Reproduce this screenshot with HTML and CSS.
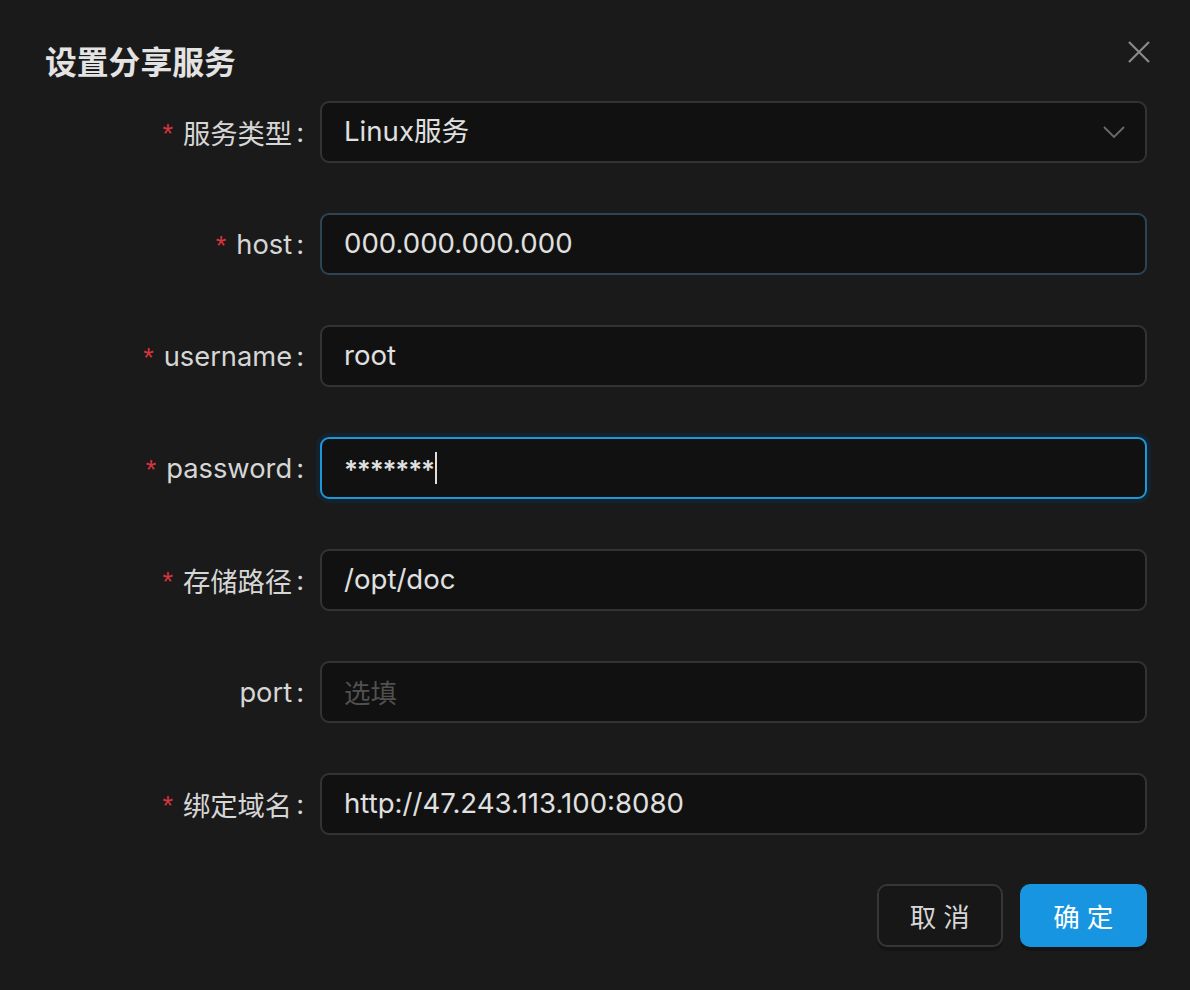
FILE: index.html
```html
<!DOCTYPE html>
<html lang="zh">
<head>
<meta charset="utf-8">
<title>设置分享服务</title>
<link rel="stylesheet" href="styles.css">
</head>
<body>
<div class="modal">
  <div class="modal-header">
    <h1 class="modal-title">设置分享服务</h1>
    <button class="close" aria-label="close">
      <svg width="24" height="24" viewBox="0 0 24 24"><path d="M2 2 L22 22 M22 2 L2 22" stroke="#8a8a8a" stroke-width="2.2" fill="none"/></svg>
    </button>
  </div>
  <form class="form">
    <div class="row">
      <label class="label"><span class="req">*</span>服务类型<span class="colon">:</span></label>
      <div class="control select">
        <span class="value">Linux服务</span>
        <svg class="arrow" width="22" height="12" viewBox="0 0 22 12"><path d="M1 1 L11 11 L21 1" stroke="#6a6a6a" stroke-width="1.8" fill="none"/></svg>
      </div>
    </div>
    <div class="row">
      <label class="label"><span class="req">*</span>host<span class="colon">:</span></label>
      <div class="control hover"><span class="value">000.000.000.000</span></div>
    </div>
    <div class="row">
      <label class="label"><span class="req">*</span>username<span class="colon">:</span></label>
      <div class="control"><span class="value">root</span></div>
    </div>
    <div class="row">
      <label class="label"><span class="req">*</span>password<span class="colon">:</span></label>
      <div class="control focus"><span class="value pw">*******</span><span class="caret"></span></div>
    </div>
    <div class="row">
      <label class="label"><span class="req">*</span>存储路径<span class="colon">:</span></label>
      <div class="control"><span class="value">/opt/doc</span></div>
    </div>
    <div class="row">
      <label class="label">port<span class="colon">:</span></label>
      <div class="control"><span class="value placeholder">选填</span></div>
    </div>
    <div class="row">
      <label class="label"><span class="req">*</span>绑定域名<span class="colon">:</span></label>
      <div class="control"><span class="value">http://47.243.113.100:8080</span></div>
    </div>
  </form>
  <div class="footer">
    <button class="btn">取 消</button>
    <button class="btn primary">确 定</button>
  </div>
</div>
</body>
</html>
```
FILE: styles.css
```css
html, body {
  margin: 0;
  padding: 0;
  background: #1a1a1a;
}
body {
  width: 1190px;
  height: 990px;
  overflow: hidden;
  font-family: "Inter", "Noto Sans CJK SC", sans-serif;
}
.modal {
  width: 1190px;
  height: 990px;
  box-sizing: border-box;
  background: #1a1a1a;
  padding: 0 43px 0 45px;
  border-bottom-left-radius: 6px;
}
.modal-header {
  display: flex;
  justify-content: space-between;
  align-items: center;
  height: 122px;
}
.modal-title {
  margin: 0;
  font-size: 31.8px;
  font-weight: 700;
  color: #e3e3e3;
  font-family: "Noto Sans CJK SC", sans-serif;
  line-height: 1;
  margin-top: -1px;
}
.close {
  background: none;
  border: none;
  padding: 0;
  width: 24px;
  height: 24px;
  margin-top: -19px;
  margin-right: -4px;
  cursor: pointer;
}
.form {
  display: flex;
  flex-direction: column;
  gap: 50px;
  margin-top: -21px;
}
.row {
  display: flex;
  align-items: center;
  height: 62px;
}
.label {
  width: 275px;
  display: flex;
  justify-content: flex-end;
  align-items: center;
  font-size: 27.3px;
  color: #d6d6d6;
  white-space: nowrap;
}
.req {
  color: #d8343c;
  font-family: "Liberation Sans", sans-serif;
  font-size: 27px;
  margin-right: 10px;
  position: relative;
  top: 2px;
}
.colon {
  margin: 0 16px 0 4px;
}
.control {
  flex: 1;
  height: 62px;
  box-sizing: border-box;
  border: 2px solid #333333;
  border-radius: 9px;
  background: #111111;
  display: flex;
  align-items: center;
  padding: 0 22px;
  font-size: 27.6px;
  color: #e0e0e0;
}
.control.hover {
  border-color: #2d4553;
}
.control.focus {
  border-color: #1c98d8;
  box-shadow: 0 0 0 4px #13222d;
}
.value {
  line-height: 1;
}
.placeholder {
  color: #505050;
  font-family: "Noto Sans CJK SC", sans-serif;
  font-size: 26.5px;
}
.pw {
  font-size: 26px;
  letter-spacing: -1.2px;
  font-weight: 600;
  position: relative;
  top: 2px;
}
.caret {
  display: inline-block;
  width: 2px;
  height: 32px;
  background: #dedede;
  margin-left: 1px;
}
.select {
  justify-content: space-between;
}
.arrow {
  margin-right: -2px;
}
.footer {
  display: flex;
  justify-content: flex-end;
  gap: 17px;
  margin-top: 49px;
}
.btn {
  height: 63px;
  min-width: 126px;
  padding: 0 28px;
  border-radius: 10px;
  border: 2px solid #363636;
  background: #171717;
  color: #d6d6d6;
  font-size: 26.5px;
  letter-spacing: 0.5px;
  font-family: "Noto Sans CJK SC", sans-serif;
  box-shadow: 0 4px 0 rgba(0,0,0,0.2);
  cursor: pointer;
}
.btn.primary {
  background: #1895e0;
  border-color: #1895e0;
  color: #ffffff;
  min-width: 127px;
}
```
